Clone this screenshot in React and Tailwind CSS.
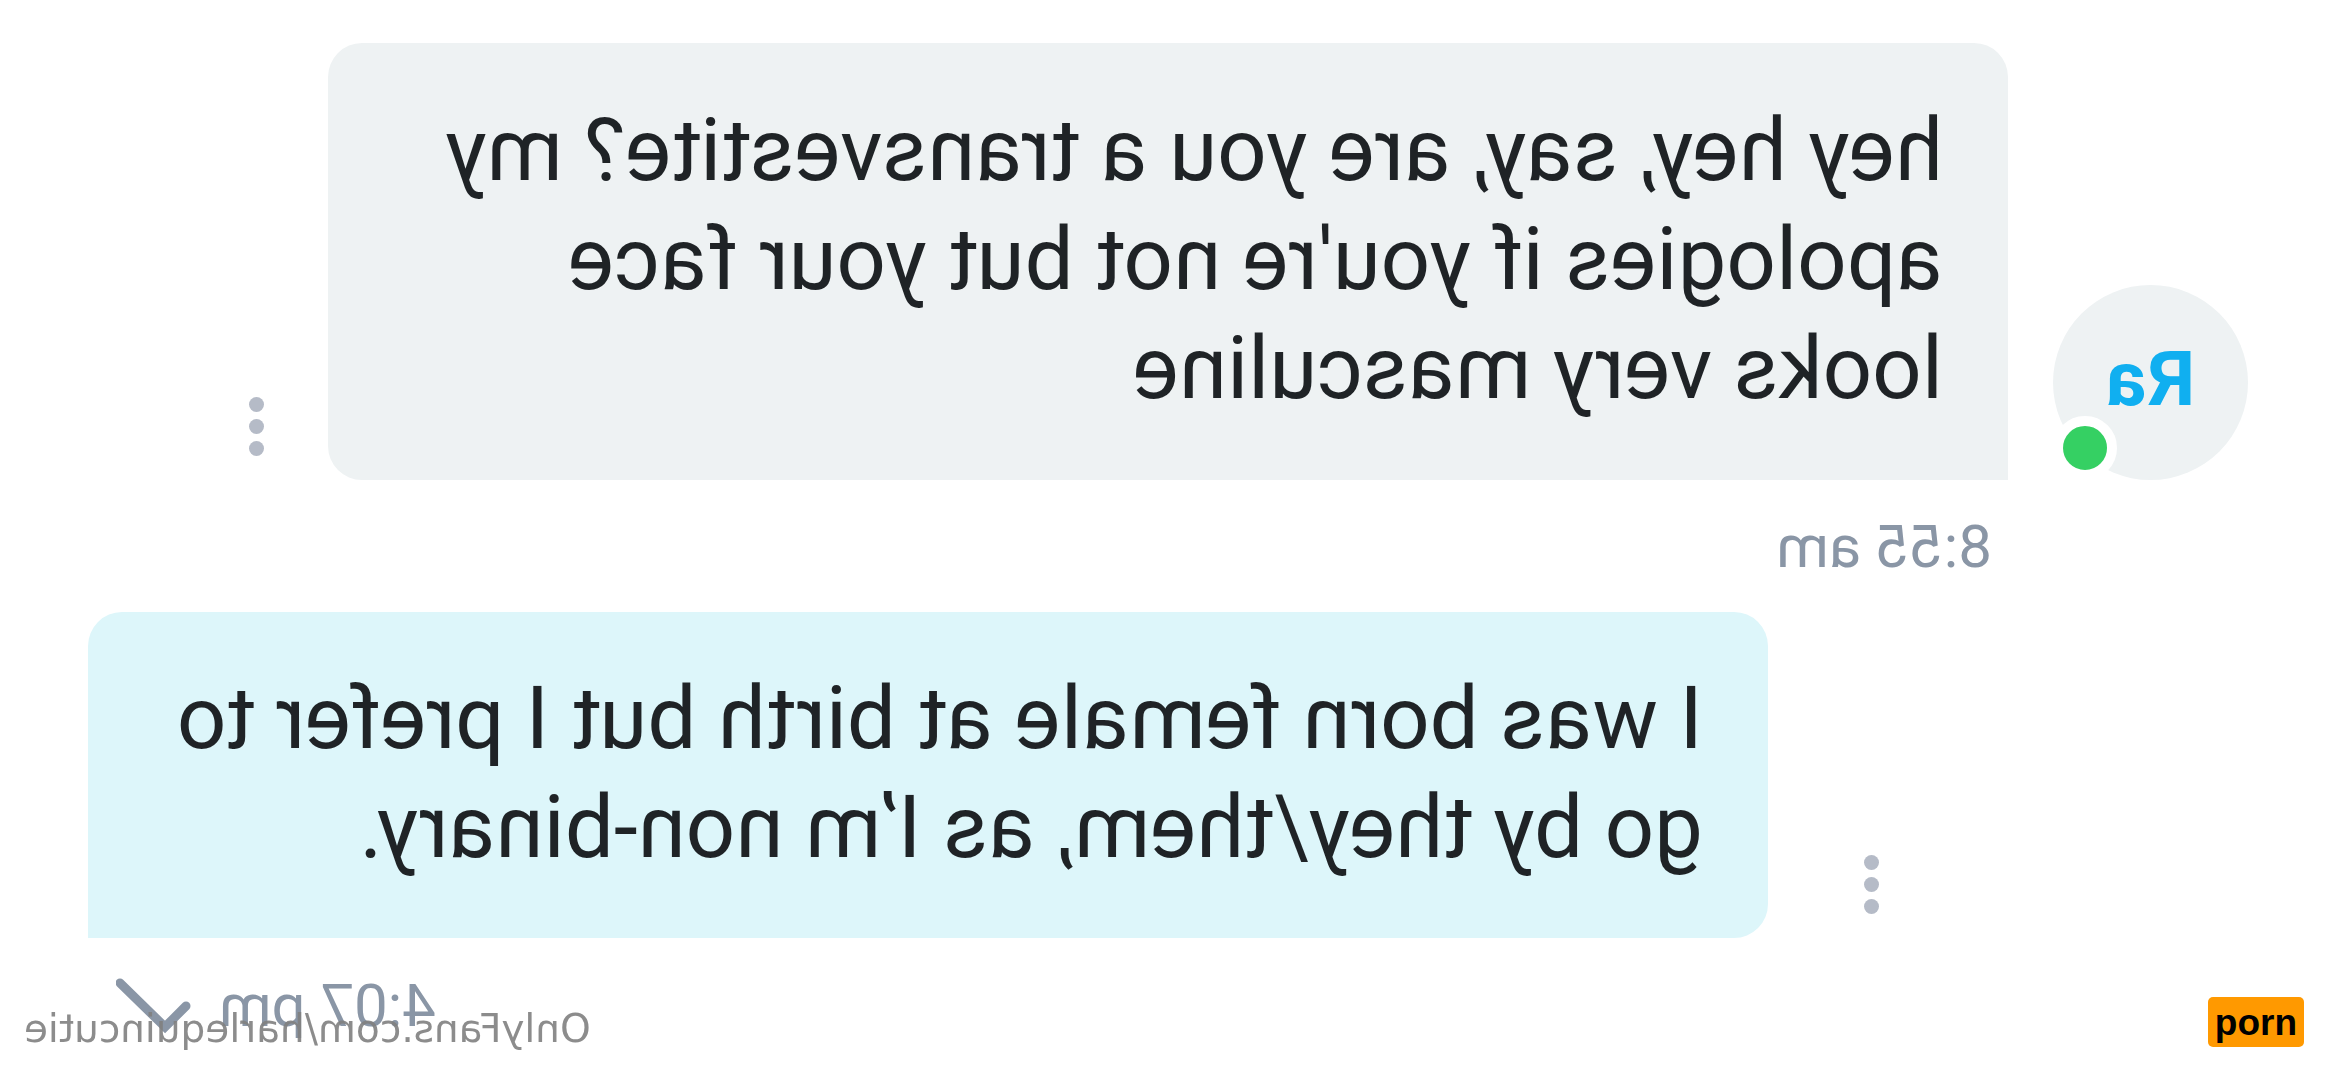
import React from "react";

const MoreButton = () => (
  <button
    type="button"
    aria-label="More options"
    className="flex flex-col items-center gap-[7px] p-2"
  >
    <span className="w-[15px] h-[15px] rounded-full bg-[#b5bbc7]" />
    <span className="w-[15px] h-[15px] rounded-full bg-[#b5bbc7]" />
    <span className="w-[15px] h-[15px] rounded-full bg-[#b5bbc7]" />
  </button>
);

const Avatar = ({ initials }) => (
  <div className="relative shrink-0 w-[195px] h-[195px] pb-2 rounded-full bg-[#eef2f3] flex items-center justify-center">
    <span className="text-[76px] leading-none font-bold text-[#10aff0]">
      {initials}
    </span>
    <span className="absolute right-0 bottom-0 w-[64px] h-[64px] rounded-full border-[10px] border-white bg-[#35d063]" />
  </div>
);

const CheckIcon = () => (
  <svg
    viewBox="0 0 76 56"
    className="w-[76px] h-[56px]"
    fill="none"
    stroke="currentColor"
    strokeWidth="9"
    strokeLinecap="round"
  >
    <path d="M6 28 L27 49 L72 5" />
  </svg>
);

const App = () => {
  return (
    <div className="relative min-h-screen overflow-hidden bg-white font-[Roboto,sans-serif] text-[#1f2326]">
      {/* The conversation is shown flipped, only the tag stays readable */}
      <main className="relative min-h-screen -scale-x-100 px-[88px] pt-[43px]">
        <section>
          <div className="flex items-end">
            <Avatar initials="Ra" />
            <p className="flex-1 ml-[45px] px-[65px] pt-[53px] pb-[57px] rounded-[34px] rounded-bl-none bg-[#eef2f3] text-[87px] leading-[109px]">
              hey hey, say, are you a transvestite? my apologies if you're not
              but your face looks very masculine
            </p>
            <div className="shrink-0 w-[240px] pl-[56px] pb-4 flex">
              <MoreButton />
            </div>
          </div>
          <time className="block pl-[256px] pt-[2px] text-[60px] leading-[130px] text-[#8a96a6]">
            8:55 am
          </time>
        </section>

        <section>
          <div className="flex items-end">
            <div className="shrink-0 w-[480px] pr-[88px] pb-4 flex justify-end">
              <MoreButton />
            </div>
            <p className="flex-1 px-[65px] pt-[52px] pb-[56px] rounded-[34px] rounded-br-none bg-[#ddf6fa] text-[87px] leading-[109px]">
              I was born female at birth but I prefer to go by they/them, as I’m
              non-binary.
            </p>
          </div>
          <div className="flex items-center justify-end gap-[27px] pt-[2px] pr-[28px] text-[#8a96a6]">
            <time className="text-[60px] leading-[132px]">4:07 pm</time>
            <CheckIcon />
          </div>
        </section>

        <a
          href="#profile"
          className="absolute right-[24px] bottom-[29px] font-['DejaVu_Sans',sans-serif] text-[39px] leading-none text-[#808080]/90"
        >
          OnlyFans.com/harlequincutie
        </a>
      </main>

      <span className="absolute right-[32px] bottom-[30px] px-[7px] pt-[2px] rounded-[5px] bg-[#ff9900] font-['Liberation_Sans',sans-serif] text-[37px] leading-[48px] font-bold text-black">
        porn
      </span>
    </div>
  );
};

export default App;
